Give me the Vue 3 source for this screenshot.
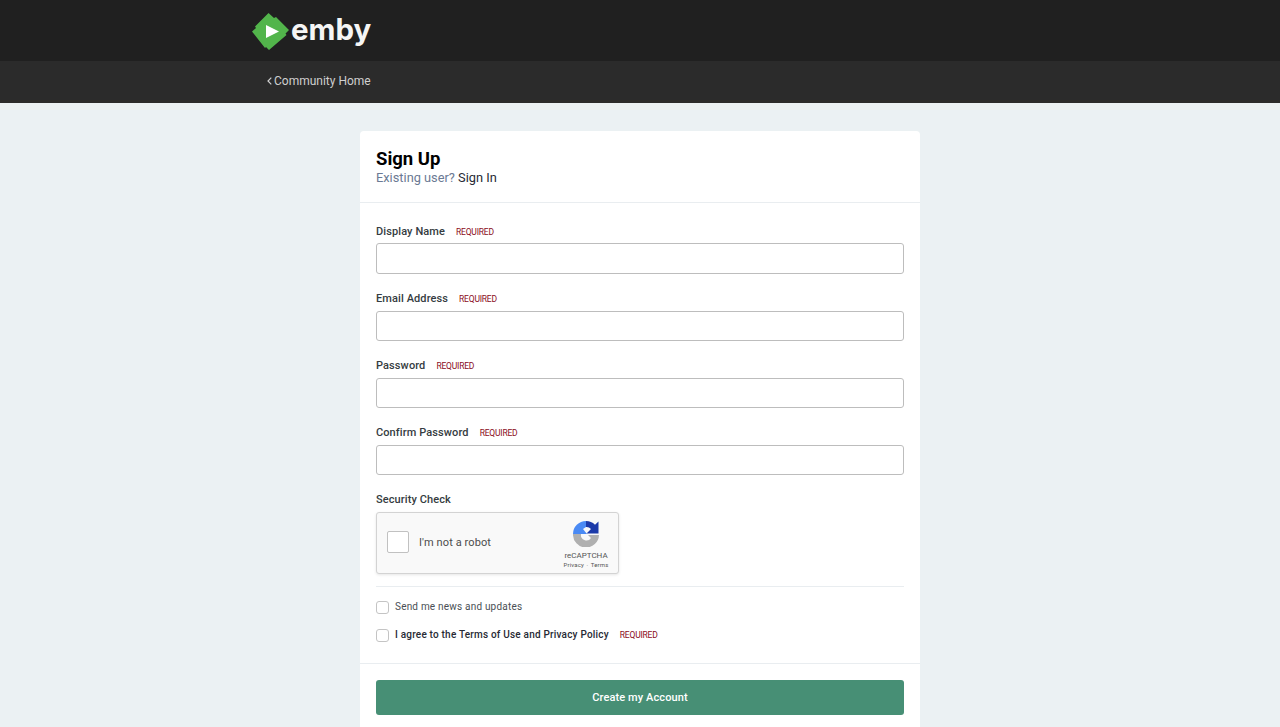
<script setup>
const fields = [
  { label: 'Display Name', type: 'text' },
  { label: 'Email Address', type: 'email' },
  { label: 'Password', type: 'password' },
  { label: 'Confirm Password', type: 'password' },
]
</script>

<template>
  <div class="page">
    <header class="top">
      <div class="wrap logo-wrap">
        <svg class="mark" width="37" height="37" viewBox="0 0 37 37" aria-hidden="true">
          <path d="M16.500 0 L22 5 L24 4 L37 17 L33.500 20.500 L34.500 22 L17 37 L14 34 L13 35 L0 18.500 L4 15 L3 13.500 Z" fill="#52b54b" />
          <path d="M14 12 L27 18.500 L14 25 Z" fill="#fff" />
        </svg>
        <span class="wordmark">emby</span>
      </div>
    </header>
    <nav class="sub">
      <div class="wrap sub-wrap">
        <svg width="5" height="8" viewBox="0 0 5 8" aria-hidden="true"><path d="M4.300 .7 1 4l3.300 3.300" fill="none" stroke="#d0d0d0" stroke-width="1.200" /></svg>
        <a class="home">Community Home</a>
      </div>
    </nav>
    <main class="card">
      <div class="head">
        <h1>Sign Up</h1>
        <p><span class="muted">Existing user?</span> <a>Sign In</a></p>
      </div>
      <form class="form" @submit.prevent>
        <div v-for="f in fields" :key="f.label" class="field">
          <label><b>{{ f.label }}</b><span class="req">REQUIRED</span></label>
          <input :type="f.type" />
        </div>
        <div class="security">
          <label><b>Security Check</b></label>
          <div class="captcha">
            <span class="cbox"></span>
            <span class="robot">I'm not a robot</span>
            <div class="brand">
              <svg width="26" height="26" viewBox="0 0 26 26" aria-hidden="true">
                <path d="M13 0 V6 L10 8 L14 13 H0 A13 13 0 0 1 13 0 Z" fill="#4a8af4" />
                <path d="M13 0 A13 13 0 0 1 22 3.700 L25.500 .5 V12.500 H13.500 L18 8 A6 6 0 0 0 13 6 Z" fill="#1c3aa9" />
                <path d="M0 13 H8 A5.500 5.500 0 0 0 18 17 L15 14 H26 A13 13 0 0 1 0 13 Z" fill="#b0b0b0" />
              </svg>
              <span class="rc">reCAPTCHA</span>
              <span class="pt">Privacy <i>·</i> Terms</span>
            </div>
          </div>
        </div>
        <hr />
        <label class="check first"><input type="checkbox" /><span>Send me news and updates</span></label>
        <label class="check"><input type="checkbox" /><span class="agree"><b>I agree to the Terms of Use and Privacy Policy</b></span><span class="req">REQUIRED</span></label>
      </form>
      <div class="foot"><button type="button">Create my Account</button></div>
    </main>
  </div>
</template>

<style>
html, body { margin: 0; height: 100%; overflow: hidden; background: #ebf1f3; }
</style>

<style scoped>
.page { height: 727px; overflow: hidden; background: #ebf1f3; font-family: Roboto, "Liberation Sans", sans-serif; color: #272a34; }
.wrap { width: 776px; margin: 0 auto; box-sizing: border-box; }
.top { height: 61px; background: #202020; }
.logo-wrap { display: flex; align-items: center; height: 61px; }
.mark { margin-top: 1px; }
.wordmark { margin-left: 2px; margin-top: -1px; font: 700 29.500px/1 Inter, sans-serif; color: #f5f5f5; }
.sub { height: 42px; background: #2b2b2b; }
.sub-wrap { display: flex; align-items: center; gap: 2px; height: 39px; padding-left: 15px; }
.home { font-size: 12px; color: #cfcfcf; }
.card { width: 560px; margin: 28px auto 0; background: #fff; border-radius: 4px; }
.head { height: 72px; padding: 17px 16px 0; box-sizing: border-box; border-bottom: 1px solid #e9edf0; }
h1 { margin: 0; font-size: 18.500px; font-weight: 700; line-height: 22px; color: #000; }
.head p { margin: 0; font-size: 12.800px; line-height: 16px; }
.muted { color: #6b7a94; }
.head a { color: #272a34; }
.form { padding: 20.600px 16px 0; }
.field { height: 67.200px; }
label { display: block; }
label b { font-size: 11px; font-weight: 500; color: #353c41; letter-spacing: .1px; }
.field label, .security label { height: 19.800px; line-height: 11.200px; }
.req { margin-left: 11px; font-size: 8.500px; letter-spacing: -.2px; color: #8a0a1a; }
.field input { display: block; width: 100%; height: 30.500px; box-sizing: border-box; border: 1px solid #bdbdbd; border-radius: 3px; background: #fff; outline: none; }
.security { height: 93.800px; }
.captcha { position: relative; display: flex; align-items: center; width: 243px; height: 62px; box-sizing: border-box; border: 1px solid #d3d3d3; border-radius: 3px; background: #f9f9f9; box-shadow: 0 1px 3px rgba(0, 0, 0, .1); }
.cbox { width: 20px; height: 20px; margin: -3px 0 0 10px; background: #fff; border: 1px solid #c1c1c1; border-radius: 2px; }
.robot { margin: -1px 0 0 10px; font-size: 11px; color: #4c4c4c; letter-spacing: .1px; }
.brand { position: absolute; top: 8px; right: 10px; display: flex; flex-direction: column; align-items: center; width: 44px; color: #555; }
.rc { margin-top: 4px; font-size: 8px; line-height: 10px; }
.pt { font-size: 6px; line-height: 8px; white-space: nowrap; letter-spacing: .15px; }
.pt i { font-style: normal; margin: 0 1px; }
hr { height: 1px; margin: 0; border: 0; background: #e9edf0; }
.check { display: flex; align-items: center; height: 28px; font-size: 10px; letter-spacing: .2px; color: #4a4f55; }
.check.first { margin-top: 5.500px; }
.check input { width: 13px; height: 13px; margin: 2px 6px 0 0; appearance: none; border: 1px solid #c4c4c4; border-radius: 3px; background: #fff; }
.check .agree b { font-size: 10px; font-weight: 500; color: #272a34; letter-spacing: .2px; }
.foot { margin-top: 14.500px; padding: 16px; border-top: 1px solid #e9edf0; }
button { display: block; width: 100%; height: 35px; border: 0; border-radius: 3px; background: #478f75; color: #fff; font: 500 11px Roboto, sans-serif; letter-spacing: .1px; }
</style>
